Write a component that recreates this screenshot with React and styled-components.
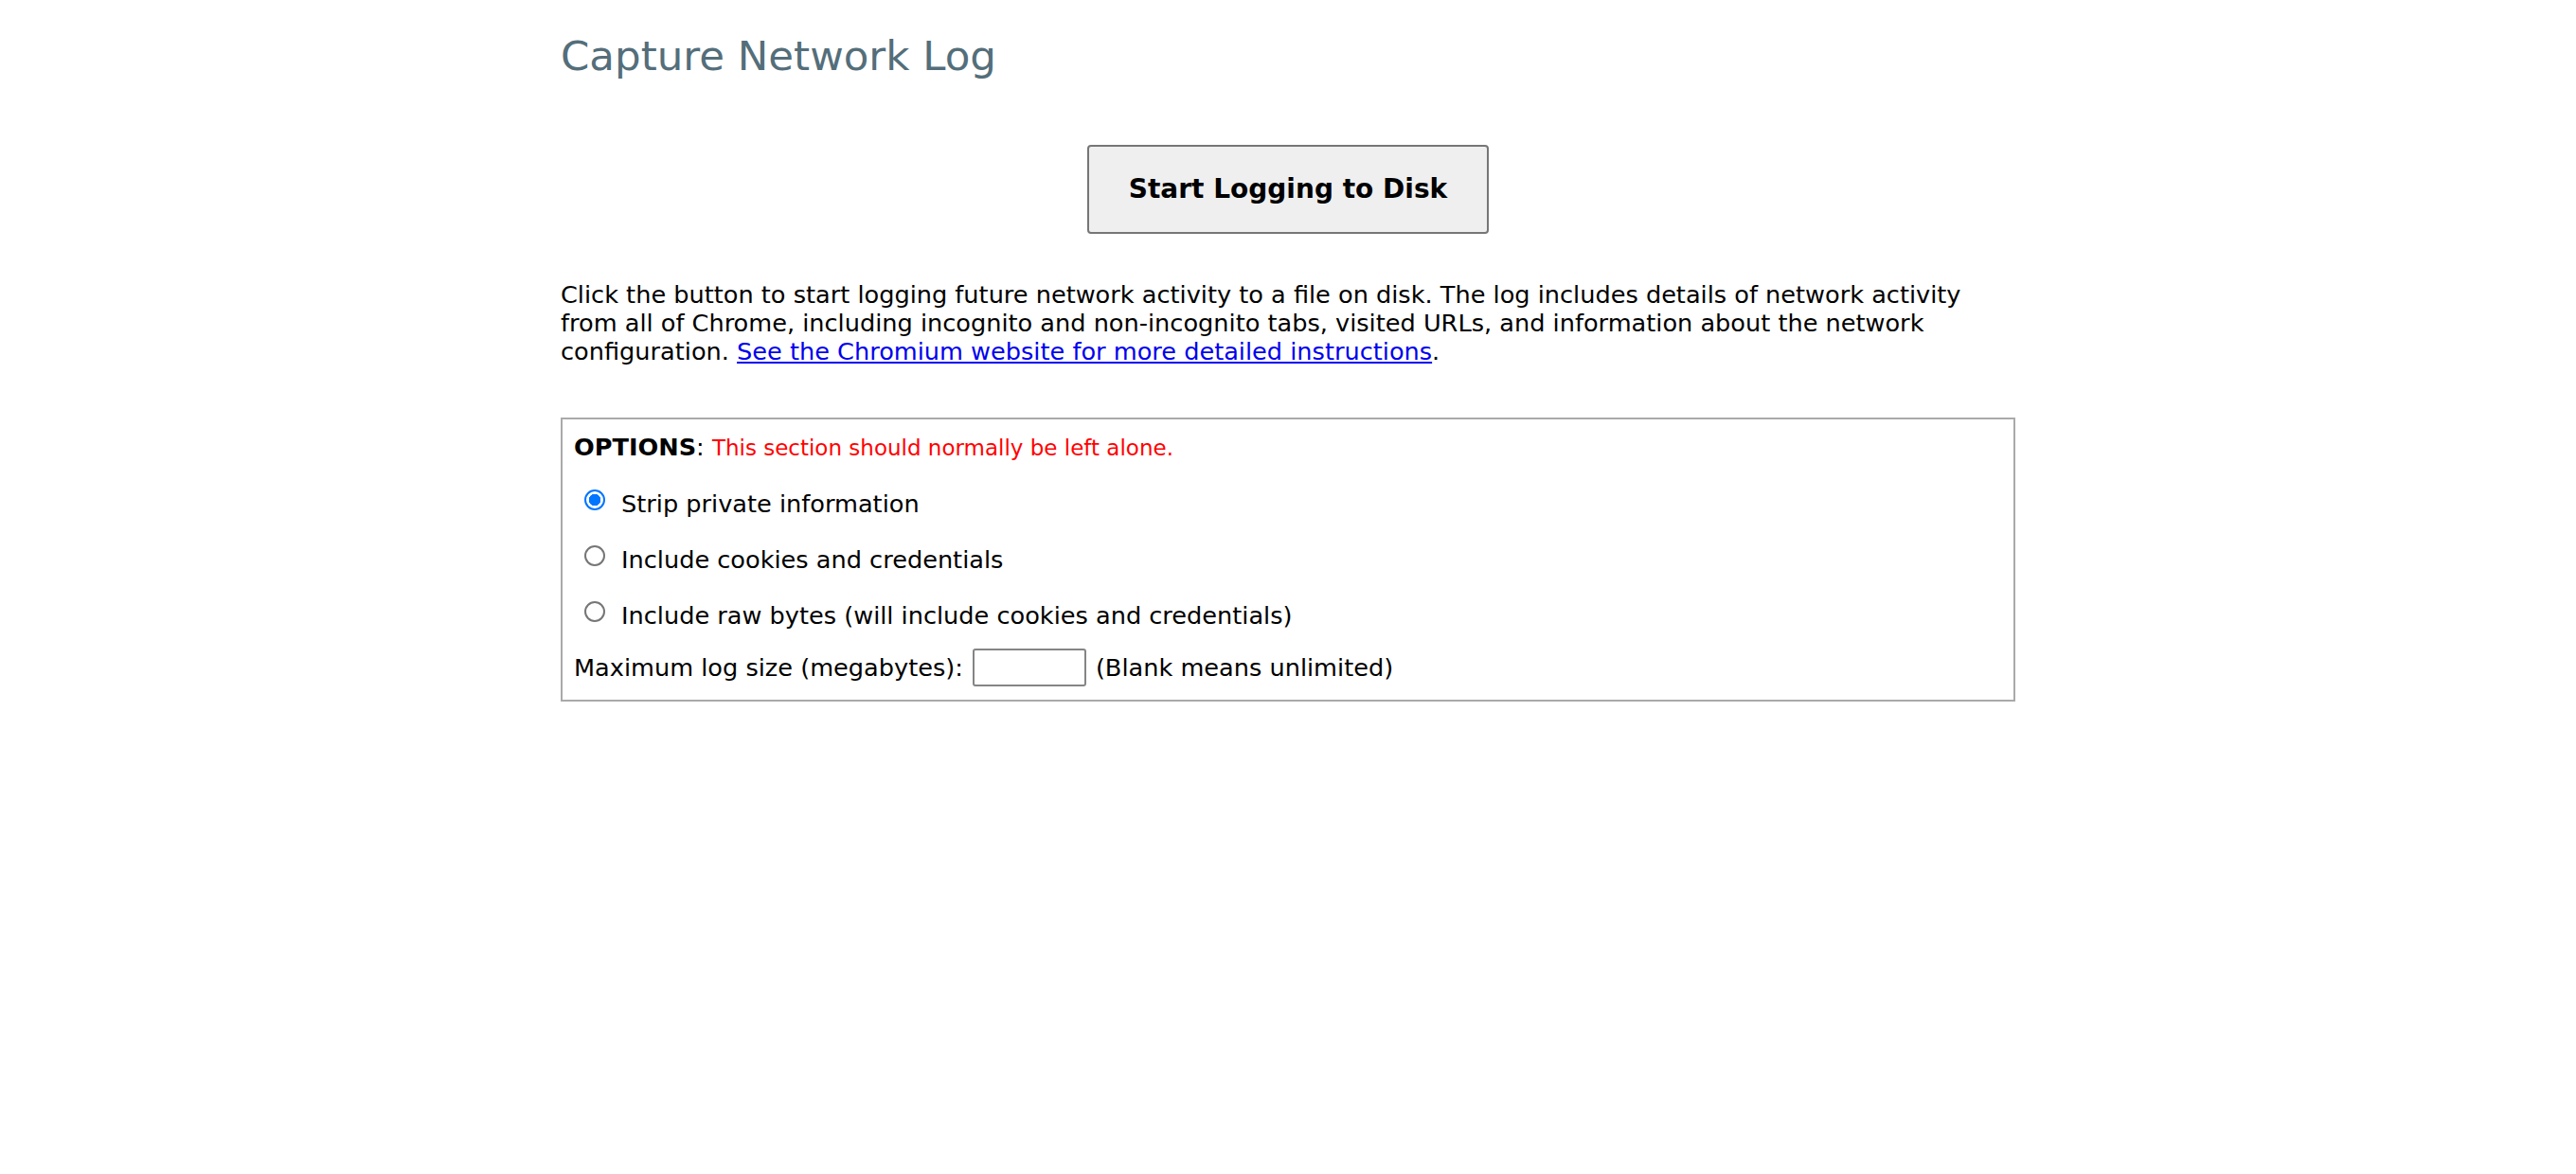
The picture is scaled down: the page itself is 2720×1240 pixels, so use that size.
import React from "react";
import styled, { createGlobalStyle } from "styled-components";

const GlobalStyle = createGlobalStyle`
  html, body {
    margin: 0;
    background: #fff;
  }
  body {
    font-family: "DejaVu Sans", "Liberation Sans", sans-serif;
    font-size: 25.6px;
    color: #000;
  }
`;

const Page = styled.main`
  width: 1536px;
  margin: 0 auto;
  padding-top: 34px;
`;

const Title = styled.h1`
  margin: 0;
  font-size: 43.5px;
  font-weight: normal;
  line-height: 50px;
  color: #546e7a;
`;

const ButtonRow = styled.div`
  display: flex;
  justify-content: center;
  margin-top: 69px;
`;

const StartButton = styled.button`
  box-sizing: border-box;
  width: 424px;
  height: 94px;
  padding: 0 0 2px;
  font-family: inherit;
  font-size: 28px;
  font-weight: bold;
  color: #000;
  background: #efefef;
  border: 2px solid #767676;
  border-radius: 4px;
`;

const Intro = styled.p`
  margin: 49px 0 0;
  line-height: 30px;
`;

const Link = styled.a`
  color: #0000ee;
  text-decoration: underline;
`;

const OptionsBox = styled.div`
  margin-top: 55px;
  border: 2px solid #aaaaaa;
  padding: 14px 12px 14px;
  display: flex;
  flex-direction: column;
`;

const OptionsHeader = styled.div`
  line-height: 30px;
`;

const OptionsLabel = styled.b`
  font-weight: bold;
`;

const Warning = styled.span`
  color: #ff0000;
  font-size: 23px;
`;

const RadioRow = styled.label`
  display: flex;
  align-items: center;
  height: 30px;
  margin-top: 29px;
  line-height: 30px;
`;

const Radio = styled.input`
  appearance: none;
  box-sizing: border-box;
  flex: none;
  width: 22px;
  height: 22px;
  margin: 0 17px 9px 11px;
  border: 2px solid #767676;
  border-radius: 50%;
  background: #fff;

  &:checked {
    border-color: #0075ff;
    background: radial-gradient(circle, #0075ff 0 6px, #fff 6.5px);
  }
`;

const SizeRow = styled.div`
  display: flex;
  align-items: center;
  height: 40px;
  margin-top: 20px;
`;

const SizeInput = styled.input`
  box-sizing: border-box;
  width: 120px;
  height: 40px;
  margin: 0 10px 0 10px;
  border: 2px solid #858585;
  border-radius: 3px;
  font-family: inherit;
  font-size: 22px;
`;

const options = [
  { id: "strip", label: "Strip private information", checked: true },
  { id: "cookies", label: "Include cookies and credentials" },
  { id: "raw", label: "Include raw bytes (will include cookies and credentials)" },
];

const App = () => {
  return (
    <>
      <GlobalStyle />
      <Page>
        <Title>Capture Network Log</Title>
        <ButtonRow>
          <StartButton>Start Logging to Disk</StartButton>
        </ButtonRow>
        <Intro>
          Click the button to start logging future network activity to a file
          on disk. The log includes details of network activity from all of
          Chrome, including incognito and non-incognito tabs, visited URLs, and
          information about the network configuration.{" "}
          <Link href="#">See the Chromium website for more detailed instructions</Link>.
        </Intro>
        <OptionsBox>
          <OptionsHeader>
            <OptionsLabel>OPTIONS</OptionsLabel>:{" "}
            <Warning>This section should normally be left alone.</Warning>
          </OptionsHeader>
          {options.map((opt) => (
            <RadioRow key={opt.id}>
              <Radio type="radio" name="log-mode" defaultChecked={opt.checked} />
              {opt.label}
            </RadioRow>
          ))}
          <SizeRow>
            <span>Maximum log size (megabytes):</span>
            <SizeInput type="text" />
            <span>(Blank means unlimited)</span>
          </SizeRow>
        </OptionsBox>
      </Page>
    </>
  );
};

export default App;
